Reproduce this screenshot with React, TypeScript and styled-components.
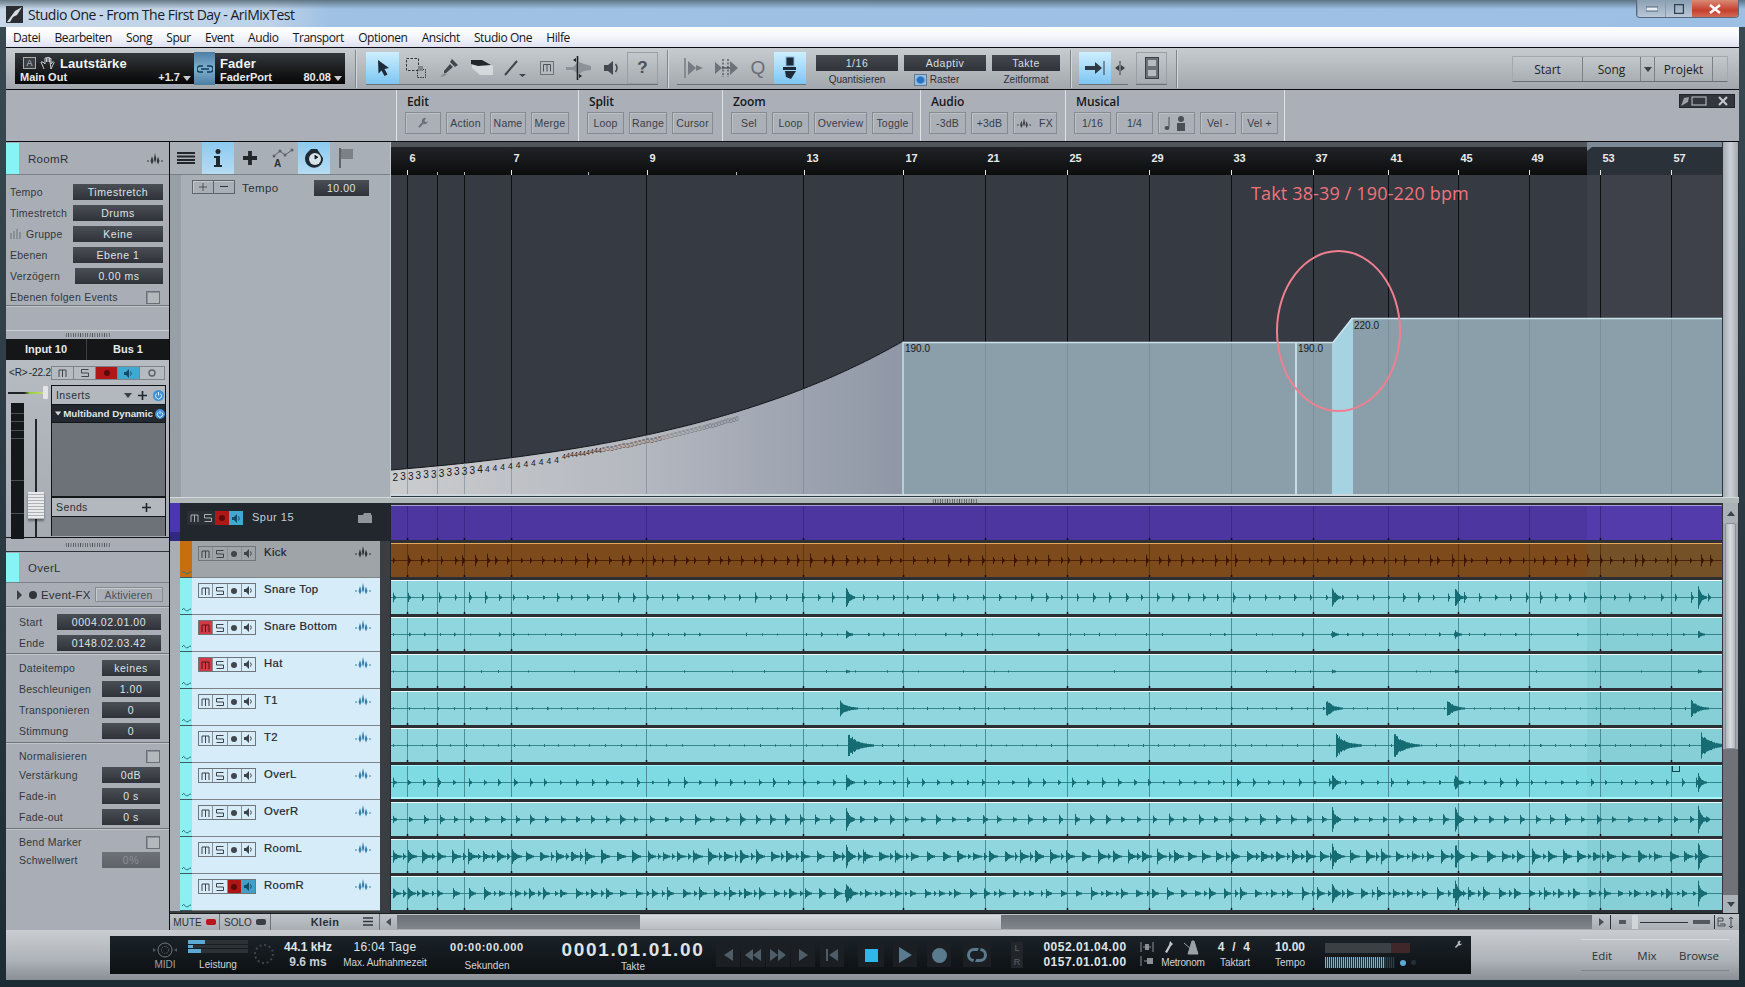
import { ReactNode } from "react";
import styled, { createGlobalStyle } from "styled-components";

const sans = `"Liberation Sans", Arial, sans-serif`;

const GlobalStyle = createGlobalStyle`
  html, body {
    margin: 0;
    width: 1745px;
    height: 987px;
    overflow: hidden;
    background: #2b3a44;
    font-family: ${sans};
    font-size: 11px;
  }
  * { box-sizing: border-box; }
`;

/* ---------- shared data ---------- */

const GRID = [407, 437, 464, 511, 646, 803, 903, 985, 1067, 1149, 1231, 1313, 1388, 1458, 1529, 1600, 1671];
const RULER: [number, string][] = [
  [407, "6"], [511, "7"], [647, "9"], [804, "13"], [903, "17"], [985, "21"], [1067, "25"], [1149, "29"],
  [1231, "33"], [1313, "37"], [1388, "41"], [1458, "45"], [1529, "49"], [1600, "53"], [1671, "57"],
];
const LANE_X = 391;
const LANE_W = 1331;
const LOOP_X = 1587 - LANE_X;

function rng(seed: number) {
  let s = seed;
  return () => {
    s = (s * 16807) % 2147483647;
    return (s % 1000) / 1000;
  };
}

interface TrackDef {
  name: string;
  mute?: boolean;
  armed?: boolean;
  orange?: boolean;
  selected?: boolean;
  amp: [number, number];
  body?: number;
  hits: number[];
  hitAmp: number;
  toms?: number[];
  tomAmp?: number;
  tail?: number;
  skip?: number;
  seed: number;
}

const BIG = [846, 1332, 1455, 1698];

const TRACKS: TrackDef[] = [
  { name: "Kick", orange: true, amp: [2, 7], hits: [], hitAmp: 0, seed: 11 },
  { name: "Snare Top", amp: [2, 5.5], body: 3, hits: BIG, hitAmp: 12, seed: 23 },
  { name: "Snare Bottom", mute: true, amp: [0.5, 1.8], hits: BIG, hitAmp: 4, skip: 0.2, seed: 37 },
  { name: "Hat", mute: true, amp: [0.4, 1], hits: BIG, hitAmp: 1.5, skip: 0.65, seed: 41 },
  { name: "T1", amp: [0.5, 1.3], hits: [], hitAmp: 0, toms: [840, 1326, 1447, 1691], tomAmp: 9, tail: 18, seed: 53 },
  { name: "T2", amp: [0.5, 1.3], hits: [], hitAmp: 0, toms: [848, 1336, 1394, 1701], tomAmp: 13, tail: 26, seed: 67 },
  { name: "OverL", selected: true, amp: [1.5, 5], body: 4, hits: BIG, hitAmp: 9, seed: 71 },
  { name: "OverR", amp: [2.5, 6], body: 6, hits: BIG, hitAmp: 14, seed: 83 },
  { name: "RoomL", amp: [4.5, 8], body: 10, hits: BIG, hitAmp: 15, seed: 97 },
  { name: "RoomR", armed: true, amp: [3.5, 7], body: 8, hits: BIG, hitAmp: 13, seed: 101 },
];

/* one wave form as a single stroked path: each hit is a fan of decaying vertical lines */
function wavePath(t: TrackDef, mid: number) {
  const r = rng(t.seed);
  const line = `M0 ${mid + 0.5}H${LANE_W} `;
  let d = "";
  const burst = (x: number, a: number, tail: number) => {
    for (let i = 0; i < tail; i++) {
      const v = a * Math.exp((-i * 3) / tail) * (0.65 + 0.35 * r());
      if (v < 0.4) continue;
      d += `M${Math.round(x + i) + 0.5} ${(mid - v).toFixed(1)}V${(mid + 1 + v).toFixed(1)} `;
    }
  };
  for (let x = 2, i = 0; x < LANE_W - 12; i++) {
    const step = t.orange ? (i % 3 === 2 ? 7 : i % 3 === 1 ? 11 : 12) + r() * 3 : 14 + r() * 2.4;
    if (!(t.skip && r() < t.skip)) {
      const a = t.amp[0] + r() * (t.amp[1] - t.amp[0]);
      burst(x, a, t.body ?? 3);
      if ((t.body ?? 0) >= 8 && r() < 0.6) burst(x - 5, a * 0.55, 4);
    }
    x += step;
  }
  t.hits.forEach((abs) => burst(abs - LANE_X, t.hitAmp, 9));
  (t.toms || []).forEach((abs) => burst(abs - LANE_X, t.tomAmp || 0, t.tail || 0));
  return { line, d };
}

/* tempo ramp: exponential rise fitted to the reference */
const curveY = (x: number) => 471 - 21.1 * (Math.exp(0.00383 * (x - LANE_X)) - 1);
const TOP = 176;
const STEPS: { x: number; y: number; label: string }[] = [];
for (let x = 391, i = 0; x < 903; i++) {
  const y = curveY(x);
  const label = i === 0 ? "2" : x < 470 ? "3" : x < 600 ? "4" : x < 700 ? "5" : "6";
  STEPS.push({ x, y, label });
  x += x < 560 ? 7.7 : x < 700 ? 4 : 3;
}

/* ---------- icons ---------- */

const Peaks = ({ color = "#2a3238", size = 16 }: { color?: string; size?: number }) => (
  <svg width={size} height={size * 0.75} viewBox="0 0 16 12">
    <path d="M0 7.500H2V8.500H0ZM14 7.500H16V8.500H14ZM3.500 8L5 3 6.500 8 5 11.500ZM6.800 6L8 0 9.300 6 8 10ZM9.700 8L11 3.500 12.500 8 11 11.500Z" fill={color} />
  </svg>
);

const MuteGlyph = ({ color = "#333" }: { color?: string }) => (
  <svg width="9" height="8" viewBox="0 0 9 8">
    <path d="M1 8V1H8V8M4.500 1V8" stroke={color} strokeWidth="1" fill="none" />
  </svg>
);
const SoloGlyph = ({ color = "#333" }: { color?: string }) => (
  <svg width="8" height="8" viewBox="0 0 8 8">
    <path d="M7.500 .5H.5V4H7.500V7.500H.5" stroke={color} strokeWidth="1" fill="none" />
  </svg>
);
const SpeakerGlyph = ({ color = "#333" }: { color?: string }) => (
  <svg width="9" height="9" viewBox="0 0 9 9">
    <path d="M0 3H2L5 0V9L2 6H0Z" fill={color} />
    <path d="M6.500 2.500Q8 4.500 6.500 6.500" stroke={color} fill="none" />
  </svg>
);
const Dot = styled.span<{ $c?: string; $s?: number }>`
  width: ${(p) => p.$s ?? 6}px;
  height: ${(p) => p.$s ?? 6}px;
  border-radius: 50%;
  background: ${(p) => p.$c ?? "#40464c"};
  display: block;
  flex: none;
`;
const Power = ({ size = 11 }: { size?: number }) => (
  <svg width={size} height={size} viewBox="0 0 11 11" style={{ flex: "none" }}>
    <circle cx="5.500" cy="5.500" r="5.500" fill="#3d8fd6" />
    <path d="M3.600 3.600a3 3 0 1 0 3.800 0M5.500 2v3.500" stroke="#e4f2ff" fill="none" />
  </svg>
);
const Caret = ({ color = "#c8ccd0" }: { color?: string }) => (
  <svg width="8" height="5" viewBox="0 0 8 5">
    <path d="M0 0H8L4 5Z" fill={color} />
  </svg>
);
const Wrench = ({ color = "#555", size = 14 }: { color?: string; size?: number }) => (
  <svg width={size} height={size} viewBox="0 0 14 14">
    <path d="M9 1a3.500 3.500 0 0 0-3 5L1.500 11 3 12.500 7.500 8a3.500 3.500 0 0 0 5-3L10.500 6.500 8.500 4.500 10.500 1.800Z" fill={color} />
  </svg>
);
const Plus = ({ color = "#22272c", size = 11, w = 2 }: { color?: string; size?: number; w?: number }) => (
  <svg width={size} height={size} viewBox="0 0 11 11">
    <path d="M5.500 0V11M0 5.500H11" stroke={color} strokeWidth={w} />
  </svg>
);

/* ---------- title + menu ---------- */

const Window = styled.div`
  width: 1745px;
  height: 987px;
  display: flex;
  flex-direction: column;
  background: linear-gradient(180deg, #3a4a52 0, #1d2b34 100%);
`;
const TitleBar = styled.div`
  height: 27px;
  flex: none;
  display: flex;
  align-items: flex-start;
  padding-left: 6px;
  background:
    linear-gradient(180deg, rgba(70, 90, 100, 0.75) 0, rgba(150, 180, 210, 0) 9px),
    linear-gradient(90deg, #c7d7e8 0, #bdd2e8 270px, #9fc1e4 330px, #9cbfe3 100%);
`;
const TitleText = styled.div`
  font: 14px "Open Sans", ${sans};
  letter-spacing: -0.48px;
  color: #16202a;
  margin: 5px 0 0 5px;
`;
const CaptionGroup = styled.div`
  margin-left: auto;
  margin-right: 6px;
  width: 103px;
  height: 18px;
  display: flex;
  border: 1px solid #59687a;
  border-top: 0;
  border-radius: 0 0 4px 4px;
  overflow: hidden;
  background: linear-gradient(180deg, #8ba0b4, #b9c8d8);
`;
const CaptionBtn = styled.div<{ $w: number; $close?: boolean }>`
  width: ${(p) => p.$w}px;
  display: flex;
  align-items: center;
  justify-content: center;
  border-left: ${(p) => (p.$close ? 0 : "1px solid #8a9aad")};
  background: ${(p) => (p.$close ? "linear-gradient(180deg, #d98a76 0, #c5402e 60%, #cf6a55 100%)" : "transparent")};
`;
const Frame = styled.div`
  flex: 1;
  display: flex;
  flex-direction: column;
  padding: 0 6px 7px;
  min-height: 0;
`;
const MenuBar = styled.div`
  height: 21px;
  flex: none;
  display: flex;
  align-items: center;
  padding-left: 7px;
  gap: 14.200px;
  font: 12px "Open Sans", ${sans};
  letter-spacing: -0.42px;
  color: #12161a;
  background: linear-gradient(180deg, #fff 0, #f8f9fc 40%, #dfe1f1 100%);
  border-bottom: 1px solid #0b0d10;
`;

/* ---------- main toolbar ---------- */

const Toolbar = styled.div`
  height: 42px;
  flex: none;
  display: flex;
  align-items: flex-start;
  background: linear-gradient(180deg, #c6cccf 0, #a2a7ad 100%);
  border-bottom: 1px solid #0b0d10;
  position: relative;
`;
const Display = styled.div<{ $w: number; $ml?: number }>`
  width: ${(p) => p.$w}px;
  margin: 5px 0 0 ${(p) => p.$ml ?? 0}px;
  height: 31px;
  padding: 2px 3px 0 5px;
  background: linear-gradient(180deg, #34383b 0, #1a1c1e 55%, #050506 100%);
  color: #f2f4f5;
`;
const DisplayTop = styled.div`
  display: flex;
  align-items: center;
  height: 16px;
  font-size: 13px;
  font-weight: 700;
  letter-spacing: 0.1px;
  gap: 4px;
`;
const DisplaySub = styled.div`
  display: flex;
  align-items: center;
  justify-content: space-between;
  font-size: 11px;
  font-weight: 700;
  color: #e8eaec;
  height: 12px;
`;
const ABox = styled.span`
  width: 13px;
  height: 12px;
  margin-left: 3px;
  border: 1px solid #a8adb0;
  background: #3b3f44;
  color: #bcc0c4;
  font-size: 9px;
  font-weight: 400;
  text-align: center;
  line-height: 10px;
`;
const LinkBtn = styled.div`
  width: 21px;
  height: 33px;
  margin-top: 4px;
  display: flex;
  align-items: center;
  justify-content: center;
  background: linear-gradient(180deg, #4d7fa6 0, #7fb0d0 50%, #4b7ea3 100%);
`;
const VSep = styled.div<{ $ml: number }>`
  width: 1px;
  height: 38px;
  margin: 2px 0 0 ${(p) => p.$ml}px;
  background: #80858b;
  box-shadow: 1px 0 0 #d4d8da;
`;
const ToolGroup = styled.div<{ $ml: number }>`
  display: flex;
  height: 33px;
  margin: 4px 0 0 ${(p) => p.$ml}px;
  border-bottom: 1px solid #6b7077;
`;
const ToolBtn = styled.div<{ $w?: number; $on?: boolean; $boxed?: boolean }>`
  width: ${(p) => p.$w ?? 33}px;
  height: 32px;
  display: flex;
  align-items: center;
  justify-content: center;
  background: ${(p) => (p.$on ? "linear-gradient(180deg, #cdeeff 0, #7ec6f2 100%)" : "transparent")};
  border: ${(p) => (p.$boxed ? "1px solid #9a9fa5" : 0)};
  color: #3b4046;
`;
const DropCol = styled.div<{ $w: number; $ml: number }>`
  width: ${(p) => p.$w}px;
  margin: 7px 0 0 ${(p) => p.$ml}px;
  display: flex;
  flex-direction: column;
  align-items: center;
`;
const Drop = styled.div`
  width: 100%;
  height: 16px;
  background: linear-gradient(180deg, #43474e 0, #30343a 100%);
  color: #d9dde0;
  font-size: 10.500px;
  letter-spacing: 0.5px;
  text-align: center;
  line-height: 16px;
`;
const DropLabel = styled.div`
  margin-top: 3px;
  font-size: 10px;
  line-height: 12px;
  color: #2c3035;
  display: flex;
  align-items: center;
  gap: 3px;
`;
const RasterCheck = styled.span`
  width: 13px;
  height: 12px;
  margin-left: -17px;
  border: 1px solid #69798a;
  background: radial-gradient(#2d6fc0 40%, #8ac1e8 60%);
`;
const PerspectiveGroup = styled.div`
  display: flex;
  margin: 8px 0 0 auto;
  margin-right: 11px;
  height: 26px;
  border: 1px solid #a4a9ae;
  border-bottom: 1px solid #6a6f75;
  background: linear-gradient(180deg, #c3c8cb, #a9aeb3);
`;
const PerspectiveBtn = styled.div<{ $w: number }>`
  width: ${(p) => p.$w}px;
  display: flex;
  align-items: center;
  justify-content: center;
  border-right: 1px solid #7c8187;
  font: 12px "Open Sans", ${sans};
  color: #1e2226;
  &:last-child {
    border-right: 0;
  }
`;

/* ---------- macro row ---------- */

const MacroRow = styled.div`
  height: 52px;
  flex: none;
  display: flex;
  background: #abb0b8;
  border-bottom: 1px solid #0b0d10;
  position: relative;
`;
const MacroSection = styled.div<{ $w: number; $ml?: number; $end?: boolean }>`
  width: ${(p) => p.$w}px;
  margin-left: ${(p) => p.$ml ?? 0}px;
  border-left: 1px solid #dfe2e4;
  border-right: ${(p) => (p.$end ? "1px solid #dfe2e4" : 0)};
  padding: 0 0 0 8px;
`;
const MacroTitle = styled.div`
  font: 600 12px "Open Sans", ${sans};
  letter-spacing: -0.1px;
  color: #15181c;
  height: 22px;
  line-height: 24px;
  padding-left: 2px;
`;
const MacroBtns = styled.div`
  display: flex;
  gap: 5px;
`;
const MacroBtn = styled.div<{ $w: number }>`
  width: ${(p) => p.$w}px;
  height: 22px;
  border: 1px solid #868b92;
  box-shadow: inset 1px 1px 0 #bcc1c6;
  display: flex;
  align-items: center;
  justify-content: center;
  gap: 8px;
  font-size: 10.500px;
  letter-spacing: 0.2px;
  color: #3a3e44;
`;
const PanelCtl = styled.div`
  position: absolute;
  top: 4px;
  right: 4px;
  width: 56px;
  height: 14px;
  display: flex;
  align-items: center;
  background: #33373d;
  border: 1px solid #22252a;
`;

/* ---------- main area ---------- */

const Main = styled.div`
  flex: none;
  height: 788px;
  display: flex;
`;
const Inspector = styled.div`
  width: 164px;
  flex: none;
  background: #a9aeb6;
  border-right: 1px solid #0b0d10;
  display: flex;
  flex-direction: column;
`;
const InspectorHeader = styled.div<{ $h: number }>`
  height: ${(p) => p.$h}px;
  flex: none;
  display: flex;
  align-items: center;
  border-bottom: 1px solid #7c8187;
  font-size: 11.500px;
  letter-spacing: 0.3px;
  color: #2c3036;
  padding-top: 1px;
  & > svg {
    margin: 0 6px 0 auto;
  }
`;
const Swatch = styled.div`
  width: 13px;
  height: 100%;
  background: #86f3f7;
  margin-right: 9px;
`;
const Section = styled.div<{ $h?: number; $line?: boolean; $pl?: number; $pt?: number; $pr?: number }>`
  flex: none;
  height: ${(p) => (p.$h ? `${p.$h}px` : "auto")};
  padding: ${(p) => p.$pt ?? 6}px ${(p) => p.$pr ?? 6}px 0 ${(p) => p.$pl ?? 4}px;
  border-bottom: ${(p) => (p.$line ? "1px solid #6f747b" : 0)};
  box-shadow: ${(p) => (p.$line ? "0 1px 0 #c2c6cb" : "none")};
`;
const Field = styled.div<{ $mb?: number }>`
  height: 16px;
  margin-bottom: ${(p) => p.$mb ?? 5}px;
  display: flex;
  align-items: center;
  justify-content: space-between;
  font-size: 10.500px;
  letter-spacing: 0.25px;
  color: #33373d;
`;
const FieldLabel = styled.span`
  display: flex;
  align-items: center;
  gap: 4px;
  white-space: nowrap;
`;
const ValueBtn = styled.div<{ $w: number; $dim?: boolean }>`
  width: ${(p) => p.$w}px;
  height: 16px;
  background: ${(p) =>
    p.$dim ? "linear-gradient(180deg, #6e7278, #5f6369)" : "linear-gradient(180deg, #4a4e55 0, #2f3339 100%)"};
  color: ${(p) => (p.$dim ? "#8b8f94" : "#dfe2e5")};
  font-size: 10.500px;
  letter-spacing: 0.55px;
  text-align: center;
  line-height: 17px;
  flex: none;
`;
const Check = styled.span<{ $mr?: number }>`
  width: 14px;
  height: 13px;
  margin-right: ${(p) => p.$mr ?? 0}px;
  border: 1px solid #6b7077;
  background: #b3b8bd;
  box-shadow: inset 1px 1px 0 #8d9298;
`;
const Splitter = styled.div<{ $h: number; $line?: boolean; $dark?: boolean }>`
  height: ${(p) => p.$h}px;
  flex: none;
  display: flex;
  align-items: center;
  justify-content: center;
  background: #a9aeb6;
  border-top: 1px solid ${(p) => (p.$dark ? "#101214" : "#c9ccd0")};
  border-bottom: ${(p) => (p.$line ? "1px solid #30343a" : 0)};
`;
const Dots = styled.div`
  width: 46px;
  height: 4px;
  background-image: radial-gradient(#4c5056 45%, transparent 50%);
  background-size: 2.400px 2px;
`;
const Tabs = styled.div`
  height: 21px;
  flex: none;
  display: grid;
  grid-template-columns: 81px 1fr;
  background: #141618;
  color: #e6e8ea;
  font-weight: 700;
  font-size: 11px;
  line-height: 21px;
  text-align: center;
  & > div:first-child {
    border-right: 1px solid #3c3f44;
  }
`;
const Strip = styled.div`
  height: 177px;
  flex: none;
  display: grid;
  grid-template-columns: 45px 115px;
  background: linear-gradient(180deg, #b7bcc2, #a6abb3);
`;
const StripLeft = styled.div`
  padding-top: 6px;
`;
const ReadOut = styled.div`
  display: flex;
  justify-content: space-between;
  padding: 0 0 0 3px;
  height: 14px;
  font-size: 10px;
  letter-spacing: -0.1px;
  color: #24282c;
  line-height: 14px;
`;
const PanTrack = styled.div`
  position: relative;
  height: 2px;
  margin: 12px 0 0 2px;
  width: 36px;
  background: linear-gradient(90deg, #1f2226 0, #1f2226 45%, #95c93d 60%, #c6e070 100%);
`;
const PanKnob = styled.div`
  position: absolute;
  right: -4px;
  top: -6px;
  width: 5px;
  height: 13px;
  background: #e3e5e7;
  border-radius: 1px;
`;
const FaderWrap = styled.div`
  position: relative;
  margin: 9px 0 0 5px;
  height: 136px;
  display: flex;
`;
const Meter = styled.div`
  width: 13px;
  height: 100%;
  background: linear-gradient(
      180deg,
      transparent 0 10px,
      #4a4e53 10px 11px,
      transparent 11px 18px,
      #4a4e53 18px 19px,
      transparent 19px 27px,
      #4a4e53 27px 28px,
      transparent 28px 35px,
      #4a4e53 35px 36px,
      transparent 36px 77px,
      #4a4e53 77px 78px,
      transparent 78px 110px,
      #4a4e53 110px 111px,
      transparent 111px
    ),
    #15181b;
`;
const FaderTrack = styled.div`
  width: 2px;
  height: 119px;
  margin: 16px 0 0 11px;
  background: #23272b;
`;
const FaderCap = styled.div`
  position: absolute;
  left: 17px;
  top: 89px;
  width: 16px;
  height: 27px;
  background: repeating-linear-gradient(180deg, #e8eaeb 0, #e8eaeb 2px, #aeb1b5 2px, #aeb1b5 3px);
  box-shadow: 0 2px 2px #0006;
`;
const StripRight = styled.div`
  padding-top: 6px;
`;
const ChanBtns = styled.div`
  display: flex;
  height: 14px;
  width: 114px;
  border: 1px solid #7e838a;
`;
const ChanBtn = styled.div<{ $c?: string; $w?: number }>`
  flex: ${(p) => (p.$w ? `0 0 ${p.$w}px` : 1)};
  display: flex;
  align-items: center;
  justify-content: center;
  background: ${(p) => p.$c ?? "#b6bbc1"};
  border-right: 1px solid #7e838a;
  &:last-child {
    border-right: 0;
  }
`;
const Inserts = styled.div`
  margin-top: 5px;
  width: 115px;
  height: 151px;
  border: 1px solid #111316;
  border-bottom: 0;
  display: flex;
  flex-direction: column;
  background: #6d7278;
`;
const InsertHead = styled.div`
  height: 19px;
  flex: none;
  display: flex;
  align-items: center;
  gap: 6px;
  padding: 0 1px 0 4px;
  background: #b3b8be;
  border-bottom: 1px solid #14171a;
  font-size: 10.500px;
  letter-spacing: 0.4px;
  color: #2a2e33;
  & > span {
    margin-right: auto;
  }
`;
const SendSpacer = styled.i`
  width: 7px;
`;
const InsertItem = styled.div`
  height: 18px;
  flex: none;
  display: flex;
  align-items: center;
  gap: 2px;
  padding: 0 0 0 3px;
  background: #23282e;
  color: #dfe4e8;
  font-weight: 700;
  font-size: 9.800px;
  white-space: nowrap;
  border-bottom: 1px solid #14171a;
`;
const InsertEmpty = styled.div`
  height: 75px;
  flex: none;
  border-bottom: 2px solid #14171a;
`;
const SendFoot = styled.div`
  flex: 1;
`;
const EventFx = styled.div`
  display: flex;
  align-items: center;
  height: 24px;
  padding: 0 9px 0 11px;
  gap: 4px;
  font-size: 11.500px;
  letter-spacing: 0.2px;
  color: #2c3035;
  white-space: nowrap;
  border-bottom: 1px solid #6f747b;
  box-shadow: 0 1px 0 #c2c6cb;
  flex: none;
`;
const Tri = styled.span`
  width: 0;
  height: 0;
  border-left: 5px solid #3a3f45;
  border-top: 5px solid transparent;
  border-bottom: 5px solid transparent;
  margin-right: 3px;
`;
const ActivateBtn = styled.div`
  margin-left: auto;
  width: 68px;
  height: 15px;
  flex: none;
  border: 1px solid #868b92;
  box-shadow: inset 1px 1px 0 #c6cace;
  text-align: center;
  line-height: 14px;
  font-size: 10.500px;
  letter-spacing: 0.2px;
  color: #4c5056;
`;

/* ---------- editor ---------- */

const Editor = styled.div`
  flex: 1;
  min-width: 0;
  display: flex;
  flex-direction: column;
`;
const Upper = styled.div`
  height: 355px;
  flex: none;
  display: flex;
`;
const SidePane = styled.div`
  width: 220px;
  flex: none;
  display: flex;
  flex-direction: column;
  background: #a9afb7;
`;
const IconBar = styled.div`
  height: 33px;
  flex: none;
  display: flex;
  border-bottom: 1px solid #7b8087;
`;
const IconBtn = styled.div<{ $w: number; $on?: boolean }>`
  width: ${(p) => p.$w}px;
  display: flex;
  align-items: center;
  justify-content: center;
  background: ${(p) => (p.$on ? "linear-gradient(180deg, #8ccaf0 0, #b5dcf2 100%)" : "transparent")};
`;
const TempoPanel = styled.div`
  flex: 1;
  border-left: 11px solid #97a0a7;
  padding: 5px 21px 0 11px;
  display: flex;
  align-items: flex-start;
  font-size: 11.500px;
  letter-spacing: 0.4px;
  line-height: 15px;
  color: #2c3036;
`;
const TempoName = styled.span`
  margin-top: 1px;
`;
const PlusMinus = styled.div`
  display: flex;
  width: 43px;
  height: 14px;
  border: 1px solid #5f646b;
  margin-right: 7px;
  box-shadow: inset 1px 1px 0 #c4c8cc;
  & > div {
    flex: 1;
    display: flex;
    align-items: center;
    justify-content: center;
    &:first-child {
      border-right: 1px solid #5f646b;
    }
  }
`;
const TempoValue = styled(ValueBtn)`
  margin-left: auto;
`;
const TimeCol = styled.div`
  width: 1332px;
  flex: none;
  display: flex;
  flex-direction: column;
  position: relative;
  border-left: 1px solid #c2c6cb;
`;
const Ruler = styled.svg`
  display: block;
  flex: none;
  font-family: ${sans};
`;
const TempoSvg = styled.svg`
  display: block;
  font-family: ${sans};
`;
const Annotation = styled.div`
  position: absolute;
  left: 860px;
  top: 39px;
  font: 18px "Open Sans", ${sans};
  letter-spacing: 0.15px;
  color: #f0737a;
  white-space: nowrap;
`;
const Ellipse = styled.div`
  position: absolute;
  left: 885px;
  top: 108px;
  width: 125px;
  height: 162px;
  border: 2px solid #f0808f;
  border-radius: 50%;
`;
const VScroll = styled.div`
  width: 17px;
  flex: none;
  display: flex;
  flex-direction: column;
  background: linear-gradient(90deg, #98a0a8, #c9cfd4 50%, #9aa1a8);
  border-left: 1px solid #30343a;
  border-right: 1px solid #30343a;
`;
const ScrollArrow = styled.div<{ $h: number; $down?: boolean }>`
  height: ${(p) => p.$h}px;
  flex: none;
  display: flex;
  align-items: center;
  justify-content: center;
  background: #abb1b8;
  &::before {
    content: "";
    border-left: 4px solid transparent;
    border-right: 4px solid transparent;
    ${(p) => (p.$down ? "border-top: 5px solid #3d4248;" : "border-bottom: 5px solid #3d4248;")}
  }
`;
const ScrollThumb = styled.div<{ $h: number }>`
  height: ${(p) => p.$h}px;
  flex: none;
  margin: 0 2px;
  background: linear-gradient(90deg, #b1b7bd, #d8dce0 50%, #b1b7bd);
  border: 1px solid #8c9198;
  border-radius: 2px 2px 0 0;
`;
const ScrollRest = styled.div`
  flex: 1;
  background: #6f7379;
`;
const TopScrollFill = styled.div`
  flex: 1;
  background: linear-gradient(90deg, #a3aab1, #ccd1d6 50%, #a3aab1);
`;
const MidSplit = styled.div`
  height: 6px;
  flex: none;
  display: flex;
  align-items: center;
  justify-content: center;
  background: #b1b8b9;
  border-top: 1px solid #d4dadc;
`;
const Lower = styled.div`
  height: 410px;
  flex: none;
  display: flex;
`;
const TrackList = styled.div`
  width: 220px;
  flex: none;
  display: flex;
  flex-direction: column;
  background: #3a3d41;
`;
const FolderRow = styled.div`
  height: 38px;
  flex: none;
  display: flex;
  background: #22272d;
  color: #c9ced3;
`;
const FolderColor = styled.div`
  width: 10px;
  background: #4a37b0;
  position: relative;
  &::after {
    content: "";
    position: absolute;
    left: 0;
    right: 0;
    bottom: 0;
    height: 9px;
    background: #33287f;
  }
`;
const FolderBody = styled.div`
  flex: 1;
  display: flex;
  align-items: flex-start;
  padding: 8px 17px 0 7px;
  font-size: 11px;
  letter-spacing: 0.5px;
  gap: 9px;
  & > svg {
    margin: 2px 0 0 auto;
  }
`;
const Mini = styled.div`
  display: flex;
  height: 13px;
`;
const MiniDark = styled.div<{ $c?: string }>`
  width: 14px;
  height: 14px;
  display: flex;
  align-items: center;
  justify-content: center;
  background: ${(p) => p.$c ?? "#2a2f35"};
`;
const TrackRow = styled.div`
  height: 37px;
  flex: none;
  display: flex;
`;
const Gutter = styled.div`
  width: 10px;
  flex: none;
  background: #a9aeb6;
`;
const ColorStrip = styled.div<{ $c: string }>`
  width: 12px;
  flex: none;
  background: ${(p) => p.$c};
  border-bottom: 1px solid #3c5a60;
  display: flex;
  align-items: flex-end;
  justify-content: center;
  padding-bottom: 1px;
`;
const TrackHead = styled.div<{ $orange?: boolean }>`
  width: 188px;
  flex: none;
  display: flex;
  align-items: flex-start;
  padding: 5px 9px 0 6px;
  background: ${(p) => (p.$orange ? "#9fa4a8" : "#d6edf9")};
  border-bottom: 1px solid #7d8387;
  font-size: 11.300px;
  font-weight: 400;
  letter-spacing: 0.35px;
  line-height: 13px;
  color: #22262b;
  -webkit-text-stroke: 0.2px #22262b;
  & > svg {
    margin: 0 0 0 auto;
  }
`;
const MiniGroup = styled.div`
  display: flex;
  width: 58px;
  height: 15px;
  border: 1px solid #6f757b;
  margin-right: 8px;
  flex: none;
`;
const MiniBtn = styled.div<{ $c?: string }>`
  flex: 1;
  display: flex;
  align-items: center;
  justify-content: center;
  background: ${(p) => p.$c ?? "transparent"};
  border-right: 1px solid #8a9096;
  &:last-child {
    border-right: 0;
  }
`;
const LanesCol = styled.div`
  width: 1332px;
  flex: none;
  display: flex;
  flex-direction: column;
  background: #2c3034;
  border-left: 1px solid #22252a;
`;
const Lane = styled.div<{ $h: number; $bg: string; $top: string }>`
  height: ${(p) => p.$h}px;
  flex: none;
  margin-top: 2px;
  background: ${(p) => p.$bg};
  border-top: 1px solid ${(p) => p.$top};
  position: relative;
  & > svg {
    display: block;
  }
`;
const LaneCell = styled.div<{ $h: number }>`
  height: ${(p) => p.$h}px;
  flex: none;
  overflow: hidden;
`;
const ClipMark = styled.div`
  position: absolute;
  left: 1281px;
  top: 0;
  width: 8px;
  height: 6px;
  border: 1px solid #11484f;
  border-top: 0;
`;

/* ---------- lower bars ---------- */

const StatusBar = styled.div`
  height: 17px;
  flex: none;
  display: flex;
  align-items: center;
  background: linear-gradient(180deg, #bfc4c9, #a9aeb4);
  border-top: 1px solid #1a1d20;
  color: #2c3035;
  font-size: 10px;
`;
const BarCell = styled.div<{ $w: number; $line?: boolean }>`
  width: ${(p) => p.$w}px;
  height: 100%;
  flex: none;
  display: flex;
  align-items: center;
  justify-content: center;
  gap: 4px;
  border-right: ${(p) => (p.$line ? "1px solid #6d7278" : 0)};
`;
const SizeCell = styled(BarCell)`
  font-size: 11px;
  font-weight: 700;
  letter-spacing: 0.3px;
  position: relative;
  & > svg {
    position: absolute;
    right: 6px;
    top: 3px;
  }
`;
const Led = styled.span<{ $c: string }>`
  width: 10px;
  height: 6px;
  border-radius: 2px;
  background: ${(p) => p.$c};
`;
const HScroll = styled.div`
  flex: 1;
  height: 100%;
  display: flex;
  align-items: stretch;
  padding: 1px 0;
`;
const HPart = styled.div<{ $w: number; $light?: boolean }>`
  width: ${(p) => p.$w}px;
  flex: none;
  background: ${(p) => (p.$light ? "linear-gradient(180deg, #d5d8dc, #b9bdc3)" : "linear-gradient(180deg, #6b6f76, #80848b)")};
`;
const ArrowBtn = styled.div<{ $left?: boolean }>`
  width: ${(p) => (p.$left ? 17 : 18)}px;
  flex: none;
  display: flex;
  align-items: center;
  justify-content: center;
  &::before {
    content: "";
    border-top: 4px solid transparent;
    border-bottom: 4px solid transparent;
    ${(p) => (p.$left ? "border-right: 5px solid #4a4f55;" : "border-left: 5px solid #4a4f55;")}
  }
`;
const ZoomSlider = styled.div`
  width: 105px;
  height: 100%;
  flex: none;
  display: flex;
  align-items: center;
  padding: 0 4px 0 8px;
  border-left: 1px solid #2e3236;
  border-right: 1px solid #2e3236;
  position: relative;
`;
const SliderEnd = styled.span<{ $w: number }>`
  width: ${(p) => p.$w}px;
  height: 4px;
  background: #54585e;
  flex: none;
`;
const SliderLine = styled.span`
  flex: 1;
  height: 1px;
  margin: 0 5px 0 14px;
  background: #2e3236;
`;
const SliderCap = styled.span`
  position: absolute;
  left: 21px;
  top: 0;
  width: 6px;
  height: 14px;
  background: #d2d5d8;
`;

/* ---------- transport ---------- */

const TransportArea = styled.div`
  height: 50px;
  flex: none;
  display: flex;
  background: linear-gradient(180deg, #c9cdd1 0, #aeb3b9 60%, #8a8f96 100%);
  padding-top: 6px;
`;
const Transport = styled.div`
  width: 1361px;
  height: 38px;
  margin-left: 104px;
  flex: none;
  display: flex;
  align-items: stretch;
  background: linear-gradient(180deg, #1a2228 0, #0d1013 100%);
  color: #dfe3e6;
  position: relative;
`;
const Cell = styled.div<{ $w: number; $ml?: number; $gap?: number; $pt?: number }>`
  width: ${(p) => p.$w}px;
  margin-left: ${(p) => p.$ml ?? 0}px;
  flex: none;
  display: flex;
  flex-direction: column;
  align-items: center;
  justify-content: flex-start;
  gap: ${(p) => p.$gap ?? 0}px;
  padding-top: ${(p) => p.$pt ?? 4}px;
  white-space: nowrap;
`;
const Big = styled.div<{ $s?: number; $bold?: boolean; $ls?: number; $c?: string; $lh?: number }>`
  font-size: ${(p) => p.$s ?? 12}px;
  font-weight: ${(p) => (p.$bold ? 700 : 400)};
  letter-spacing: ${(p) => p.$ls ?? 0}px;
  color: ${(p) => p.$c ?? "#dfe3e6"};
  line-height: ${(p) => p.$lh ?? 15}px;
  height: ${(p) => p.$lh ?? 15}px;
`;
const Cap = styled.div<{ $mt?: number; $ls?: number; $c?: string }>`
  font-size: 10px;
  color: ${(p) => p.$c ?? "#cfd4d8"};
  letter-spacing: ${(p) => p.$ls ?? 0}px;
  line-height: 13px;
  margin-top: ${(p) => p.$mt ?? 2}px;
`;
const Bars = styled.div`
  width: 60px;
  height: 13px;
  margin-bottom: 4px;
  display: flex;
  flex-direction: column;
  gap: 1px;
`;
const Bar = styled.div<{ $p: number }>`
  flex: 1;
  background: linear-gradient(90deg, #5ca9d4 ${(p) => p.$p}%, #2c3136 ${(p) => p.$p}%);
`;
const TBtn = styled.div<{ $w?: number; $ml?: number }>`
  width: ${(p) => p.$w ?? 24}px;
  margin: 7px 0 7px ${(p) => p.$ml ?? 1}px;
  flex: none;
  background: #1b1f23;
  display: flex;
  align-items: center;
  justify-content: center;
`;
const LrBox = styled.div`
  width: 12px;
  margin: 6px 0 6px 20px;
  flex: none;
  display: flex;
  flex-direction: column;
  background: #22262a;
  color: #5b6168;
  font-size: 9px;
  text-align: center;
  line-height: 13px;
  justify-content: center;
  gap: 1px;
`;
const MeterBars = styled.div`
  width: 85px;
  margin: 7px 0 0 15px;
  flex: none;
  display: flex;
  flex-direction: column;
  gap: 4px;
`;
const TopMeter = styled.div`
  height: 10px;
  background: linear-gradient(90deg, #3b4045 78%, #40282a 78%);
`;
const BottomMeter = styled.div`
  height: 11px;
  display: flex;
  align-items: center;
  gap: 5px;
`;
const MeterTicks = styled.div`
  width: 70px;
  height: 11px;
  flex: none;
  background:
    linear-gradient(90deg, transparent 86%, rgba(20, 24, 28, 0.75) 86%),
    repeating-linear-gradient(90deg, #6fb7e2 0, #6fb7e2 1px, #17323f 1px, #17323f 2px);
`;
const CornerTool = styled.div`
  position: absolute;
  right: 8px;
  top: 3px;
`;
const ModeBar = styled.div`
  width: 148px;
  height: 32px;
  margin: 3px 0 0 110px;
  flex: none;
  display: flex;
  border-top: 1px solid #d7dadd;
  border-bottom: 1px solid #7f848a;
  font: 11.500px "Open Sans", ${sans};
  color: #2e3237;
  align-items: center;
`;
const ModeItem = styled.div<{ $w: number }>`
  width: ${(p) => p.$w}px;
  text-align: center;
`;

/* ---------- composed bits ---------- */

function Macro({ title, w, ml, children }: { title: string; w: number; ml?: number; children: ReactNode }) {
  return (
    <MacroSection $w={w} $ml={ml}>
      <MacroTitle>{title}</MacroTitle>
      <MacroBtns>{children}</MacroBtns>
    </MacroSection>
  );
}

function LabelField({ label, value, w, dim }: { label: ReactNode; value: string; w: number; dim?: boolean }) {
  return (
    <Field>
      <FieldLabel>{label}</FieldLabel>
      <ValueBtn $w={w} $dim={dim}>
        {value}
      </ValueBtn>
    </Field>
  );
}

function CheckField({ label, mb, mr }: { label: string; mb?: number; mr?: number }) {
  return (
    <Field $mb={mb}>
      <FieldLabel>{label}</FieldLabel>
      <Check $mr={mr} />
    </Field>
  );
}

const SmallWave = () => (
  <svg width="9" height="6" viewBox="0 0 9 6">
    <path d="M0 3Q1.500 0 3 2.500T6 3.500 9 2" stroke="#2c6f75" fill="none" />
  </svg>
);

function TrackHeader({ t }: { t: TrackDef }) {
  return (
    <TrackRow>
      <Gutter />
      <ColorStrip $c={t.orange ? "#c76f10" : "#8ceff2"}>
        <SmallWave />
      </ColorStrip>
      <TrackHead $orange={t.orange}>
        <MiniGroup>
          <MiniBtn $c={t.mute ? "#d03a44" : undefined}>
            <MuteGlyph color={t.mute ? "#5a1015" : "#3d4349"} />
          </MiniBtn>
          <MiniBtn>
            <SoloGlyph color="#3d4349" />
          </MiniBtn>
          <MiniBtn $c={t.armed ? "#b01515" : undefined}>
            <Dot $c={t.armed ? "#5a0a0a" : "#40464c"} />
          </MiniBtn>
          <MiniBtn $c={t.armed ? "#3f9fc9" : undefined}>
            <SpeakerGlyph color={t.armed ? "#124a66" : "#3d4349"} />
          </MiniBtn>
        </MiniGroup>
        {t.name}
        <Peaks color={t.orange ? "#2f363c" : "#3b7fa8"} />
      </TrackHead>
    </TrackRow>
  );
}

function LaneGrid({ h, color }: { h: number; color: string }) {
  return (
    <>
      {GRID.map((g) => (
        <g key={g}>
          <line x1={g - LANE_X + 0.5} x2={g - LANE_X + 0.5} y1={0} y2={h} stroke={color} />
          <line x1={g - LANE_X + 0.5} x2={g - LANE_X + 0.5} y1={h - 2} y2={h} stroke="#0c1012" strokeWidth="1.500" />
        </g>
      ))}
    </>
  );
}

function TrackLane({ t }: { t: TrackDef }) {
  const h = 33;
  const { line, d } = wavePath(t, 16);
  const bg = t.orange ? "#7c4a1b" : t.selected ? "#7fdbe3" : "#90d6df";
  const stroke = t.orange ? "#3e1503" : "#156c72";
  return (
    <LaneCell $h={37}>
      <Lane $h={34} $bg={bg} $top={t.orange ? "#e2a85c" : t.selected ? "#a8f6fa" : "#eef8fa"}>
        <svg width={LANE_W} height={h}>
          <rect x={LOOP_X} y={0} width={LANE_W - LOOP_X} height={h} fill="#3f8f96" opacity={t.selected ? 0.06 : 0.1} />
          <LaneGrid h={h} color={t.orange ? "#5a3510" : "#4d8f98"} />
          <path d={line} stroke={stroke} strokeOpacity="0.75" fill="none" />
          <path d={d} stroke={stroke} strokeWidth="1" fill="none" />
          {t.selected && <rect x={0} y={h - 2} width={LANE_W} height={2} fill="#a8f6fa" />}
        </svg>
        {t.selected && <ClipMark />}
      </Lane>
    </LaneCell>
  );
}

const tempoGrid = GRID.map((g) => g - LANE_X);

function TempoGraph() {
  const flat1 = 343 - TOP;
  const flat2 = 319 - TOP;
  const bottom = 320;
  const ramp = STEPS.map((s) => `L${(s.x - LANE_X).toFixed(1)} ${(s.y - TOP).toFixed(1)}`).join(" ");
  return (
    <TempoSvg width={LANE_W} height={321}>
      <defs>
        <linearGradient id="rampFill" x1="0" x2="1" y1="0" y2="0">
          <stop offset="0" stopColor="#cbccce" />
          <stop offset="0.5" stopColor="#b3b7bf" />
          <stop offset="1" stopColor="#8f97a6" />
        </linearGradient>
      </defs>
      <rect width={LANE_W} height={321} fill="#363a42" />
      <rect x={LOOP_X} width={LANE_W - LOOP_X} height={321} fill="#3e4149" />
      {tempoGrid.map((x) => (
        <line key={x} x1={x + 0.5} x2={x + 0.5} y1={0} y2={321} stroke="#0d0f12" />
      ))}
      <path d={`M0 ${bottom} ${ramp} L${903 - LANE_X} ${flat1} L${903 - LANE_X} ${bottom} Z`} fill="url(#rampFill)" />
      <path d={`M0 ${STEPS[0].y - TOP} ${ramp} L${903 - LANE_X} ${flat1}`} fill="none" stroke="#14161a" />
      <polygon
        points={`${903 - LANE_X},${flat1} ${1333 - LANE_X},${flat1} ${1352 - LANE_X},${flat2} ${LANE_W},${flat2} ${LANE_W},${bottom} ${903 - LANE_X},${bottom}`}
        fill="#8a9faa"
      />
      {tempoGrid.map((x) => (
        <line
          key={x}
          x1={x + 0.5}
          x2={x + 0.5}
          y1={x > 903 - LANE_X ? (x > 1340 - LANE_X ? flat2 : flat1) : curveY(x + LANE_X) - TOP}
          y2={bottom}
          stroke="#6d8190"
          strokeOpacity="0.55"
        />
      ))}
      <rect x={1332 - LANE_X} y={flat2} width={21} height={bottom - flat2} fill="#a5d3e2" />
      <polygon
        points={`${1333 - LANE_X},${flat1} ${1352 - LANE_X},${flat2} ${1330 - LANE_X},${flat2 - 1} ${1330 - LANE_X},${flat1}`}
        fill="#363a42"
      />
      <path
        d={`M${903 - LANE_X} ${bottom}V${flat1 + 0.5}H${1333 - LANE_X}L${1352 - LANE_X} ${flat2 + 0.5}H${LANE_W}`}
        stroke="#cae4ec"
        strokeWidth="1.500"
        fill="none"
      />
      <rect x={1295 - LANE_X} y={flat1} width={2} height={bottom - flat1} fill="#c3dde6" />
      <rect x={0} y={bottom - 1} width={LANE_W} height={2} fill="#cdd7dc" />
      {STEPS.filter((s) => s.x < 735).map((s, i) => (
        <text
          key={i}
          x={s.x - LANE_X + 1.5}
          y={s.y - TOP + (s.x < 560 ? 11 : 8)}
          fontSize={s.x < 480 ? 10 : s.x < 560 ? 8.5 : 7}
          fill={s.x < 600 ? "#15181c" : "#5c6068"}
          opacity={s.x > 660 ? 0.6 : 1}
        >
          {s.label}
        </text>
      ))}
      <text x={905 - LANE_X} y={flat1 + 10} fontSize="10" fill="#161b20">190.0</text>
      <text x={1298 - LANE_X} y={flat1 + 10} fontSize="10" fill="#161b20">190.0</text>
      <text x={1354 - LANE_X} y={flat2 + 11} fontSize="10" fill="#161b20">220.0</text>
    </TempoSvg>
  );
}

function RulerBar() {
  const minor = [437, 464, 588, 736];
  return (
    <Ruler width={LANE_W} height={33}>
      <defs>
        <linearGradient id="rulerBg" x1="0" x2="0" y1="0" y2="1">
          <stop offset="0" stopColor="#24272a" />
          <stop offset="1" stopColor="#0b0c0e" />
        </linearGradient>
      </defs>
      <rect width={LANE_W} height={33} fill="url(#rulerBg)" />
      <rect width={LANE_W} height={5} fill="#50555b" />
      <rect x={LOOP_X} width={LANE_W - LOOP_X} height={33} fill="#2b3138" />
      <polygon points={`${LOOP_X},0 ${LANE_W},0 ${LANE_W},5 ${LOOP_X + 5},5 ${LOOP_X},9`} fill="#7b8a96" />
      {RULER.map(([x, label]) => (
        <g key={label}>
          <line x1={x - LANE_X + 0.5} x2={x - LANE_X + 0.5} y1={28} y2={33} stroke="#e4e6e8" />
          <text x={x - LANE_X + 2.5} y={20} fontSize="11" fontWeight="700" fill="#e8eaec">
            {label}
          </text>
        </g>
      ))}
      {minor.map((x) => (
        <line key={x} x1={x - LANE_X + 0.5} x2={x - LANE_X + 0.5} y1={30} y2={33} stroke="#b5b8bb" />
      ))}
    </Ruler>
  );
}

/* ---------- app ---------- */

export default function App() {
  return (
    <Window>
      <GlobalStyle />
      <TitleBar>
        <svg width="17" height="17" viewBox="0 0 17 17" style={{ marginTop: 6 }}>
          <rect width="17" height="17" fill="#2a2e33" />
          <path d="M1 16L9 5 16 1 11 9 7 11 4 16Z" fill="#d7dce0" />
        </svg>
        <TitleText>Studio One - From The First Day - AriMixTest</TitleText>
        <CaptionGroup>
          <CaptionBtn $w={28}>
            <svg width="12" height="6"><rect y="1" width="12" height="4" fill="#e8eef4" stroke="#56667a" /></svg>
          </CaptionBtn>
          <CaptionBtn $w={27}>
            <svg width="10" height="10"><rect x=".5" y=".5" width="9" height="9" fill="none" stroke="#33404e" strokeWidth="1.500" /></svg>
          </CaptionBtn>
          <CaptionBtn $w={46} $close>
            <svg width="12" height="10"><path d="M1 1L11 9M11 1L1 9" stroke="#fff" strokeWidth="2.500" /></svg>
          </CaptionBtn>
        </CaptionGroup>
      </TitleBar>
      <Frame>
        <MenuBar>
          {["Datei", "Bearbeiten", "Song", "Spur", "Event", "Audio", "Transport", "Optionen", "Ansicht", "Studio One", "Hilfe"].map((m) => (
            <span key={m}>{m}</span>
          ))}
        </MenuBar>

        <Toolbar>
          <Display $w={179} $ml={9}>
            <DisplayTop>
              <ABox>A</ABox>
              <svg width="16" height="14" viewBox="0 0 16 14">
                <path d="M4 13L1 6 3 6 5 8V2H6.500V6M6.500 1.500H8V6M8 1.500H9.500V6M9.500 2.500H11V8L13 5.500 14 6.500 11 13Z" fill="none" stroke="#c9cdd1" />
              </svg>
              <span>Lautstärke</span>
            </DisplayTop>
            <DisplaySub>
              <span>Main Out</span>
              <span>
                +1.7 <Caret />
              </span>
            </DisplaySub>
          </Display>
          <LinkBtn>
            <svg width="16" height="8" viewBox="0 0 16 8">
              <path d="M6 1H3a3 3 0 0 0 0 6H6M10 1H13a3 3 0 0 1 0 6H10M4 4H12" stroke="#123a5c" fill="none" strokeWidth="1.300" />
            </svg>
          </LinkBtn>
          <Display $w={130}>
            <DisplayTop>
              <span>Fader</span>
            </DisplayTop>
            <DisplaySub>
              <span>FaderPort</span>
              <span>
                80.08 <Caret />
              </span>
            </DisplaySub>
          </Display>
          <VSep $ml={10} />
          <ToolGroup $ml={10}>
            <ToolBtn $on>
              <svg width="16" height="18" viewBox="0 0 16 18"><path d="M3 1L14 9 9.500 10 12.500 15.500 9.500 17 6.500 11.500 3.500 14.500Z" fill="#1d2a38" /></svg>
            </ToolBtn>
            <ToolBtn>
              <svg width="22" height="22" viewBox="0 0 22 22"><path d="M1.500 1.500H13.500V13.500H1.500Z" fill="none" stroke="#30353a" strokeDasharray="2.500 1.500" /><path d="M12.500 12.500H20.500V20.500H12.500Z" fill="none" stroke="#30353a" strokeDasharray="1.500 1" /><rect x="13" y="9" width="5" height="5" fill="#808589" /></svg>
            </ToolBtn>
            <ToolBtn>
              <svg width="22" height="22" viewBox="0 0 22 22"><path d="M14 2L20 8 17 10 12 5ZM12 7L15 10 8 16H6V14Z" fill="#40464c" /><path d="M2 20Q5 16 7 16L9 17Q7 20 2 20Z" fill="#8d9297" /></svg>
            </ToolBtn>
            <ToolBtn>
              <svg width="24" height="20" viewBox="0 0 24 20"><path d="M2 3L12 3 23 8V17H10L2 10Z" fill="#d6d9dc" /><path d="M1 2H12L21 7 8 8 1 6Z" fill="#23272b" /></svg>
            </ToolBtn>
            <ToolBtn $w={34}>
              <svg width="24" height="20" viewBox="0 0 24 20"><path d="M2 17L14 3" stroke="#3d4349" strokeWidth="2" /><path d="M16 16H23L19.500 19Z" fill="#3d4349" /></svg>
            </ToolBtn>
            <ToolBtn $w={30}>
              <svg width="14" height="14" viewBox="0 0 14 14"><rect x=".5" y=".5" width="13" height="13" fill="#b6bbc0" stroke="#6d7278" /><path d="M3.500 10.500V3.500H10.500V10.500M7 3.500V10.500" stroke="#4c5258" fill="none" /></svg>
            </ToolBtn>
            <ToolBtn $w={34}>
              <svg width="28" height="24" viewBox="0 0 28 24"><path d="M1 11H8L12 7V17L8 14H1ZM14 6L19 8 26 10V14L19 15 14 18Z" fill="#8c9298" /><path d="M12.500 0V24" stroke="#1d2024" strokeWidth="1.600" /><path d="M11 2L8 4 11 6ZM14 18V22L17 20Z" fill="#1d2024" /></svg>
            </ToolBtn>
            <ToolBtn $w={31}>
              <svg width="18" height="18" viewBox="0 0 18 18"><path d="M1 6H5L10 2V16L5 12H1Z" fill="#44494f" /><path d="M12.500 5Q15.500 9 12.500 13" stroke="#44494f" strokeWidth="1.500" fill="none" /></svg>
            </ToolBtn>
          </ToolGroup>
          <ToolGroup $ml={0}>
            <ToolBtn $w={31} $boxed>
              <span style={{ fontSize: 17, fontWeight: 700, color: "#4b5056" }}>?</span>
            </ToolBtn>
          </ToolGroup>
          <VSep $ml={9} />
          <ToolGroup $ml={9}>
            <ToolBtn $w={32}>
              <svg width="22" height="20" viewBox="0 0 22 20"><path d="M3 0V20" stroke="#777c82" strokeWidth="1.500" /><path d="M6 3L14 10 6 17ZM14 7L21 10 14 13Z" fill="#777c82" /></svg>
            </ToolBtn>
            <ToolBtn $w={33}>
              <svg width="26" height="20" viewBox="0 0 26 20"><path d="M2 4L9 10 2 16ZM17 3L25 10 17 17Z" fill="#6f7379" /><path d="M10 1V19M15 1V19" stroke="#2d3136" strokeDasharray="2 1.500" /><path d="M9 10H17" stroke="#2d3136" /></svg>
            </ToolBtn>
            <ToolBtn $w={32}>
              <span style={{ fontSize: 19, color: "#6a6f75" }}>Q</span>
            </ToolBtn>
            <ToolBtn $w={32} $on>
              <svg width="16" height="24" viewBox="0 0 16 24"><rect x="4" y="1" width="8" height="9" fill="#1d2a38" stroke="#8cb8d8" /><path d="M1 11H14V14H1Z" fill="#1d2a38" /><path d="M3 15H14L9 23 4 21Z" fill="#1d2a38" /></svg>
            </ToolBtn>
          </ToolGroup>
          <DropCol $w={82} $ml={10}>
            <Drop>1/16</Drop>
            <DropLabel>Quantisieren</DropLabel>
          </DropCol>
          <DropCol $w={82} $ml={6}>
            <Drop>Adaptiv</Drop>
            <DropLabel>
              <RasterCheck />
              Raster
            </DropLabel>
          </DropCol>
          <DropCol $w={68} $ml={6}>
            <Drop>Takte</Drop>
            <DropLabel>Zeitformat</DropLabel>
          </DropCol>
          <VSep $ml={10} />
          <ToolGroup $ml={8}>
            <ToolBtn $w={32} $on>
              <svg width="20" height="14" viewBox="0 0 20 14"><path d="M0 5H10V1L17 7 10 13V9H0Z" fill="#2e3a46" /><path d="M19 0V14" stroke="#2e3a46" /></svg>
            </ToolBtn>
            <ToolBtn $w={17}>
              <svg width="12" height="14" viewBox="0 0 12 14"><path d="M6 0V14" stroke="#3a3f45" /><path d="M5 4L1 7 5 10ZM7 4L11 7 7 10Z" fill="#3a3f45" /></svg>
            </ToolBtn>
          </ToolGroup>
          <ToolGroup $ml={8}>
            <ToolBtn $w={31} $boxed>
              <svg width="14" height="22" viewBox="0 0 14 22"><rect x=".5" y=".5" width="13" height="21" fill="#6c7076" stroke="#3a3f45" /><rect x="3" y="3" width="8" height="6" fill="#b6bbc0" /><rect x="3" y="13" width="8" height="6" fill="#b6bbc0" /></svg>
            </ToolBtn>
          </ToolGroup>
          <VSep $ml={9} />
          <PerspectiveGroup>
            <PerspectiveBtn $w={70}>Start</PerspectiveBtn>
            <PerspectiveBtn $w={58}>Song</PerspectiveBtn>
            <PerspectiveBtn $w={14}>
              <Caret color="#3a3f45" />
            </PerspectiveBtn>
            <PerspectiveBtn $w={58}>Projekt</PerspectiveBtn>
            <PerspectiveBtn $w={14} />
          </PerspectiveGroup>
        </Toolbar>

        <MacroRow>
          <Macro title="Edit" w={182} ml={390}>
            <MacroBtn $w={36}>
              <Wrench color="#6b7076" size={12} />
            </MacroBtn>
            <MacroBtn $w={39}>Action</MacroBtn>
            <MacroBtn $w={36}>Name</MacroBtn>
            <MacroBtn $w={38}>Merge</MacroBtn>
          </Macro>
          <Macro title="Split" w={144}>
            <MacroBtn $w={37}>Loop</MacroBtn>
            <MacroBtn $w={38}>Range</MacroBtn>
            <MacroBtn $w={41}>Cursor</MacroBtn>
          </Macro>
          <Macro title="Zoom" w={198}>
            <MacroBtn $w={36}>Sel</MacroBtn>
            <MacroBtn $w={37}>Loop</MacroBtn>
            <MacroBtn $w={53}>Overview</MacroBtn>
            <MacroBtn $w={41}>Toggle</MacroBtn>
          </Macro>
          <Macro title="Audio" w={145}>
            <MacroBtn $w={37}>-3dB</MacroBtn>
            <MacroBtn $w={37}>+3dB</MacroBtn>
            <MacroBtn $w={44}>
              <Peaks color="#3b4046" size={14} />
              FX
            </MacroBtn>
          </Macro>
          <MacroSection $w={220} $end>
            <MacroTitle>Musical</MacroTitle>
            <MacroBtns>
              <MacroBtn $w={37}>1/16</MacroBtn>
              <MacroBtn $w={37}>1/4</MacroBtn>
              <MacroBtn $w={37}>
                <svg width="26" height="16" viewBox="0 0 26 16">
                  <path d="M5 2V12" stroke="#4a4f55" /><ellipse cx="3" cy="13" rx="2.500" ry="2" fill="#4a4f55" />
                  <circle cx="17" cy="4" r="3" fill="#4a4f55" /><path d="M13 8H21V16H13Z" fill="#4a4f55" />
                </svg>
              </MacroBtn>
              <MacroBtn $w={36}>Vel -</MacroBtn>
              <MacroBtn $w={37}>Vel +</MacroBtn>
            </MacroBtns>
          </MacroSection>
          <PanelCtl>
            <svg width="32" height="12" viewBox="0 0 32 12">
              <path d="M1 11L4 3 9 2 8 7Z" fill="#9aa0a6" />
              <rect x="12" y="2" width="14" height="8" fill="none" stroke="#c4c8cc" />
            </svg>
            <svg width="22" height="10" viewBox="0 0 22 10">
              <path d="M7 1L15 9M15 1L7 9" stroke="#c6cace" strokeWidth="2" />
            </svg>
          </PanelCtl>
        </MacroRow>

        <Main>
          <Inspector>
            <InspectorHeader $h={33}>
              <Swatch />
              RoomR
              <Peaks color="#33383d" size={16} />
            </InspectorHeader>
            <Section $h={131} $pt={9} $line>
              <LabelField label="Tempo" value="Timestretch" w={90} />
              <LabelField label="Timestretch" value="Drums" w={90} />
              <LabelField
                label={
                  <>
                    <svg width="12" height="10"><path d="M1 10V4M4 10V2M7 10V0M10 10V3" stroke="#8b9096" strokeWidth="2" /></svg>
                    Gruppe
                  </>
                }
                value="Keine"
                w={90}
              />
              <LabelField label="Ebenen" value="Ebene 1" w={90} />
              <LabelField label="Verzögern" value="0.00 ms" w={88} />
              <CheckField label="Ebenen folgen Events" mr={3} />
            </Section>
            <Section $h={24} />
            <Splitter $h={9}>
              <Dots />
            </Splitter>
            <Tabs>
              <div>Input 10</div>
              <div>Bus 1</div>
            </Tabs>
            <Strip>
              <StripLeft>
                <ReadOut>
                  <span>&lt;R&gt;</span>
                  <span>-22.2</span>
                </ReadOut>
                <PanTrack>
                  <PanKnob />
                </PanTrack>
                <FaderWrap>
                  <Meter />
                  <FaderTrack />
                  <FaderCap />
                </FaderWrap>
              </StripLeft>
              <StripRight>
                <ChanBtns>
                  <ChanBtn>
                    <MuteGlyph color="#40464c" />
                  </ChanBtn>
                  <ChanBtn>
                    <SoloGlyph color="#40464c" />
                  </ChanBtn>
                  <ChanBtn $c="#b01818">
                    <Dot $c="#5a0a0a" />
                  </ChanBtn>
                  <ChanBtn $c="#3fa9cf">
                    <SpeakerGlyph color="#124a66" />
                  </ChanBtn>
                  <ChanBtn $w={24}>
                    <svg width="8" height="8"><circle cx="4" cy="4" r="3" fill="none" stroke="#5c6167" strokeWidth="1.400" /></svg>
                  </ChanBtn>
                </ChanBtns>
                <Inserts>
                  <InsertHead>
                    <span>Inserts</span>
                    <Caret color="#3a3f45" />
                    <Plus size={9} />
                    <Power />
                  </InsertHead>
                  <InsertItem>
                    <Caret color="#d8dcdf" />
                    Multiband Dynamic
                    <Power size={10} />
                  </InsertItem>
                  <InsertEmpty />
                  <InsertHead>
                    <span>Sends</span>
                    <Plus size={9} />
                    <SendSpacer />
                  </InsertHead>
                  <SendFoot />
                </Inserts>
              </StripRight>
            </Strip>
            <Splitter $h={15} $line $dark>
              <Dots />
            </Splitter>
            <InspectorHeader $h={31}>
              <Swatch />
              OverL
            </InspectorHeader>
            <EventFx>
              <Tri />
              <Dot $c="#30353a" $s={8} />
              Event-FX
              <ActivateBtn>Aktivieren</ActivateBtn>
            </EventFx>
            <Section $pl={13} $pr={8} $pt={7} $line $h={47}>
              <LabelField label="Start" value="0004.02.01.00" w={104} />
              <LabelField label="Ende" value="0148.02.03.42" w={104} />
            </Section>
            <Section $pl={13} $pr={9} $pt={6} $line $h={89}>
              <LabelField label="Dateitempo" value="keines" w={58} />
              <LabelField label="Beschleunigen" value="1.00" w={58} />
              <LabelField label="Transponieren" value="0" w={58} />
              <LabelField label="Stimmung" value="0" w={58} />
            </Section>
            <Section $pl={13} $pr={9} $pt={5} $line $h={86}>
              <CheckField label="Normalisieren" mb={3} />
              <LabelField label="Verstärkung" value="0dB" w={58} />
              <LabelField label="Fade-in" value="0 s" w={58} />
              <LabelField label="Fade-out" value="0 s" w={58} />
            </Section>
            <Section $pl={13} $pr={9} $pt={5}>
              <CheckField label="Bend Marker" mb={2} />
              <LabelField label="Schwellwert" value="0%" w={58} dim />
            </Section>
          </Inspector>

          <Editor>
            <Upper>
              <SidePane>
                <IconBar>
                  <IconBtn $w={32}>
                    <svg width="18" height="12"><path d="M0 1H18M0 4.500H18M0 8H18M0 11H18" stroke="#22272c" strokeWidth="2" /></svg>
                  </IconBtn>
                  <IconBtn $w={32} $on>
                    <svg width="10" height="18" viewBox="0 0 10 18"><circle cx="5" cy="2.500" r="2.500" fill="#1e2a30" /><path d="M1 7H7V16H9V18H1V16H3V9H1Z" fill="#1e2a30" /></svg>
                  </IconBtn>
                  <IconBtn $w={31}>
                    <Plus size={14} w={3} />
                  </IconBtn>
                  <IconBtn $w={33}>
                    <svg width="24" height="20" viewBox="0 0 24 20">
                      <path d="M4 8L10 3 15 7 22 2" stroke="#5d6268" fill="none" />
                      <circle cx="4" cy="8" r="1.500" fill="#5d6268" /><circle cx="10" cy="3" r="1.500" fill="#5d6268" /><circle cx="15" cy="7" r="1.500" fill="#5d6268" /><circle cx="22" cy="2" r="1.500" fill="#5d6268" />
                      <text x="4" y="19" fontSize="10" fontWeight="700" fill="#2a2f34">A</text>
                    </svg>
                  </IconBtn>
                  <IconBtn $w={32} $on>
                    <svg width="20" height="20" viewBox="0 0 20 20"><path d="M7 1H13L19 10A9 9 0 1 1 3 5Z" fill="#1d2a33" /><circle cx="11" cy="11" r="6" fill="#d6e4ea" /><path d="M11 7V11L14 9" stroke="#1d2a33" /></svg>
                  </IconBtn>
                  <IconBtn $w={31}>
                    <svg width="16" height="20" viewBox="0 0 16 20"><path d="M2 0V20" stroke="#60656b" strokeWidth="2" /><path d="M3 1H15V11H3Z" fill="#7c8187" /></svg>
                  </IconBtn>
                </IconBar>
                <TempoPanel>
                  <PlusMinus>
                    <div><Plus size={8} w={1} color="#2f3439" /></div>
                    <div><svg width="8" height="2"><rect width="8" height="1" fill="#2f3439" /></svg></div>
                  </PlusMinus>
                  <TempoName>Tempo</TempoName>
                  <TempoValue $w={55}>10.00</TempoValue>
                </TempoPanel>
              </SidePane>
              <TimeCol>
                <RulerBar />
                <TempoGraph />
                <Annotation>Takt 38-39 / 190-220 bpm</Annotation>
                <Ellipse />
              </TimeCol>
              <VScroll>
                <TopScrollFill />
              </VScroll>
            </Upper>
            <MidSplit>
              <Dots />
            </MidSplit>
            <Lower>
              <TrackList>
                <FolderRow>
                  <FolderColor />
                  <FolderBody>
                    <Mini>
                      <MiniDark><MuteGlyph color="#aab0b6" /></MiniDark>
                      <MiniDark><SoloGlyph color="#aab0b6" /></MiniDark>
                      <MiniDark $c="#b01818"><Dot $c="#5a0a0a" /></MiniDark>
                      <MiniDark $c="#3fa9cf"><SpeakerGlyph color="#124a66" /></MiniDark>
                    </Mini>
                    Spur 15
                    <svg width="16" height="11" viewBox="0 0 16 11"><path d="M1 2H6L7 0H14V2H15V10H1Z" fill="#8f959b" /></svg>
                  </FolderBody>
                </FolderRow>
                {TRACKS.map((t) => (
                  <TrackHeader key={t.name} t={t} />
                ))}
              </TrackList>
              <LanesCol>
                <LaneCell $h={38}>
                  <Lane $h={35} $bg="#4d36a0" $top="#a99fd8">
                    <svg width={LANE_W} height={34}>
                      <rect x={LOOP_X} width={LANE_W - LOOP_X} height={34} fill="#5a40b8" opacity="0.5" />
                      <LaneGrid h={34} color="#3b2a85" />
                    </svg>
                  </Lane>
                </LaneCell>
                {TRACKS.map((t) => (
                  <TrackLane key={t.name} t={t} />
                ))}
              </LanesCol>
              <VScroll>
                <ScrollArrow $h={20} />
                <ScrollThumb $h={226} />
                <ScrollRest />
                <ScrollArrow $h={18} $down />
              </VScroll>
            </Lower>
            <StatusBar>
              <BarCell $w={50} $line>
                MUTE <Led $c="#b8161c" />
              </BarCell>
              <BarCell $w={51} $line>
                SOLO <Led $c="#3b3f44" />
              </BarCell>
              <SizeCell $w={109} $line>
                Klein
                <svg width="10" height="9"><path d="M0 1H10M0 4.500H10M0 8H10" stroke="#33383d" strokeWidth="1.500" /></svg>
              </SizeCell>
              <HScroll>
                <ArrowBtn $left />
                <HPart $w={243} />
                <HPart $w={361} $light />
                <HPart $w={591} />
                <ArrowBtn />
                <ZoomSlider>
                  <SliderEnd $w={7} />
                  <SliderLine />
                  <SliderEnd $w={17} />
                  <SliderCap />
                </ZoomSlider>
                <BarCell $w={22}>
                  <svg width="18" height="11" viewBox="0 0 18 11"><path d="M1 1H6V4H1ZM1 4V9H8V7H3" fill="none" stroke="#44494f" /><path d="M14 0V11M12 2L14 0 16 2M12 9L14 11 16 9" stroke="#44494f" fill="none" /></svg>
                </BarCell>
              </HScroll>
            </StatusBar>
          </Editor>
        </Main>

        <TransportArea>
          <Transport>
            <Cell $w={32} $ml={39} $pt={2}>
              <svg width="30" height="16" viewBox="0 0 30 16" style={{ marginTop: 4 }}>
                <circle cx="15" cy="8" r="7" fill="none" stroke="#70777d" />
                <circle cx="15" cy="8" r="3.500" fill="none" stroke="#5b6167" strokeDasharray="1.500 1" />
                <path d="M3 6L6 8 3 10ZM27 6L24 8 27 10Z" fill="#50565c" />
              </svg>
              <Cap $mt={0} $c="#9da3a8">MIDI</Cap>
            </Cell>
            <Cell $w={60} $ml={7}>
              <Bars>
                <Bar $p={28} />
                <Bar $p={8} />
                <Bar $p={22} />
              </Bars>
              <Cap $mt={1}>Leistung</Cap>
            </Cell>
            <Cell $w={20} $ml={6}>
              <svg width="22" height="22" viewBox="0 0 22 22" style={{ marginTop: 3 }}>
                <circle cx="11" cy="11" r="9" fill="none" stroke="#3f454b" strokeWidth="2" strokeDasharray="2 2.700" />
              </svg>
            </Cell>
            <Cell $w={50} $ml={9}>
              <Big $bold>44.1 kHz</Big>
              <Big $bold $c="#c8cdd1">9.6 ms</Big>
            </Cell>
            <Cell $w={86} $ml={9}>
              <Big $ls={0.4}>16:04 Tage</Big>
              <Cap $mt={1} $ls={-0.1}>Max. Aufnahmezeit</Cap>
            </Cell>
            <Cell $w={94} $ml={12}>
              <Big $s={11} $ls={0.7} $bold>00:00:00.000</Big>
              <Cap $mt={4}>Sekunden</Cap>
            </Cell>
            <Cell $w={144} $ml={27}>
              <Big $s={19} $bold $ls={1.650} $lh={19}>0001.01.01.00</Big>
              <Cap $mt={1}>Takte</Cap>
            </Cell>
            <TBtn $ml={11}><svg width="9" height="12"><path d="M9 0V12L0 6Z" fill="#4e5d68" /></svg></TBtn>
            <TBtn><svg width="16" height="12"><path d="M8 0V12L0 6ZM16 0V12L8 6Z" fill="#4e5d68" /></svg></TBtn>
            <TBtn><svg width="16" height="12"><path d="M0 0V12L8 6ZM8 0V12L16 6Z" fill="#4e5d68" /></svg></TBtn>
            <TBtn><svg width="9" height="12"><path d="M0 0V12L9 6Z" fill="#4e5d68" /></svg></TBtn>
            <TBtn $ml={5} $w={24}><svg width="12" height="12"><path d="M1 0V12" stroke="#4e5d68" strokeWidth="2" /><path d="M12 0V12L3 6Z" fill="#4e5d68" /></svg></TBtn>
            <TBtn $ml={14} $w={26}><svg width="13" height="13"><rect width="13" height="13" fill="#2fb7e8" /></svg></TBtn>
            <TBtn $ml={9}><svg width="13" height="16"><path d="M0 0V16L13 8Z" fill="#5a7a8e" /></svg></TBtn>
            <TBtn $ml={10}><svg width="15" height="15"><circle cx="7.500" cy="7.500" r="7.500" fill="#5a7a8e" /></svg></TBtn>
            <TBtn $ml={12} $w={28}><svg width="20" height="14" viewBox="0 0 20 14"><rect x="1.500" y="1.500" width="17" height="11" rx="5.500" fill="none" stroke="#5a7a8e" strokeWidth="3" /><path d="M7 14L13 0" stroke="#1b1f23" strokeWidth="2" /></svg></TBtn>
            <LrBox><span>L</span><span>R</span></LrBox>
            <Cell $w={84} $ml={20}>
              <Big $bold $ls={0.5}>0052.01.04.00</Big>
              <Big $bold $ls={0.5}>0157.01.01.00</Big>
            </Cell>
            <Cell $w={16} $ml={12} $gap={4} $pt={6}>
              <svg width="14" height="10"><path d="M1 0V10M13 0V10M3 5H11" stroke="#8a9096" /><rect x="5" y="2" width="4" height="6" fill="#8a9096" /></svg>
              <svg width="14" height="10"><path d="M1 0V10M4 5H13" stroke="#8a9096" /><rect x="7" y="2" width="6" height="6" fill="#8a9096" /></svg>
            </Cell>
            <Cell $w={46} $ml={5}>
              <svg width="38" height="15" viewBox="0 0 38 15">
                <path d="M6 1L9 4 7 6 3 13 1 12 5 5Z" fill="#bfc5ca" />
                <path d="M24 14L28 1H30L34 14ZM20 3L28 10" fill="#9aa1a7" stroke="#9aa1a7" />
              </svg>
              <Cap $mt={1} $ls={-0.2}>Metronom</Cap>
            </Cell>
            <Cell $w={40} $ml={9}>
              <Big $bold $ls={2.200}>4 / 4</Big>
              <Cap $mt={1}>Taktart</Cap>
            </Cell>
            <Cell $w={40} $ml={15}>
              <Big $bold>10.00</Big>
              <Cap $mt={1}>Tempo</Cap>
            </Cell>
            <MeterBars>
              <TopMeter />
              <BottomMeter>
                <MeterTicks />
                <Dot $c="#5ca9d4" $s={6} />
                <Dot $c="#22303a" $s={5} />
              </BottomMeter>
            </MeterBars>
            <CornerTool>
              <Wrench color="#b9bfc4" size={9} />
            </CornerTool>
          </Transport>
          <ModeBar>
            <ModeItem $w={42}>Edit</ModeItem>
            <ModeItem $w={48}>Mix</ModeItem>
            <ModeItem $w={56}>Browse</ModeItem>
          </ModeBar>
        </TransportArea>
      </Frame>
    </Window>
  );
}
